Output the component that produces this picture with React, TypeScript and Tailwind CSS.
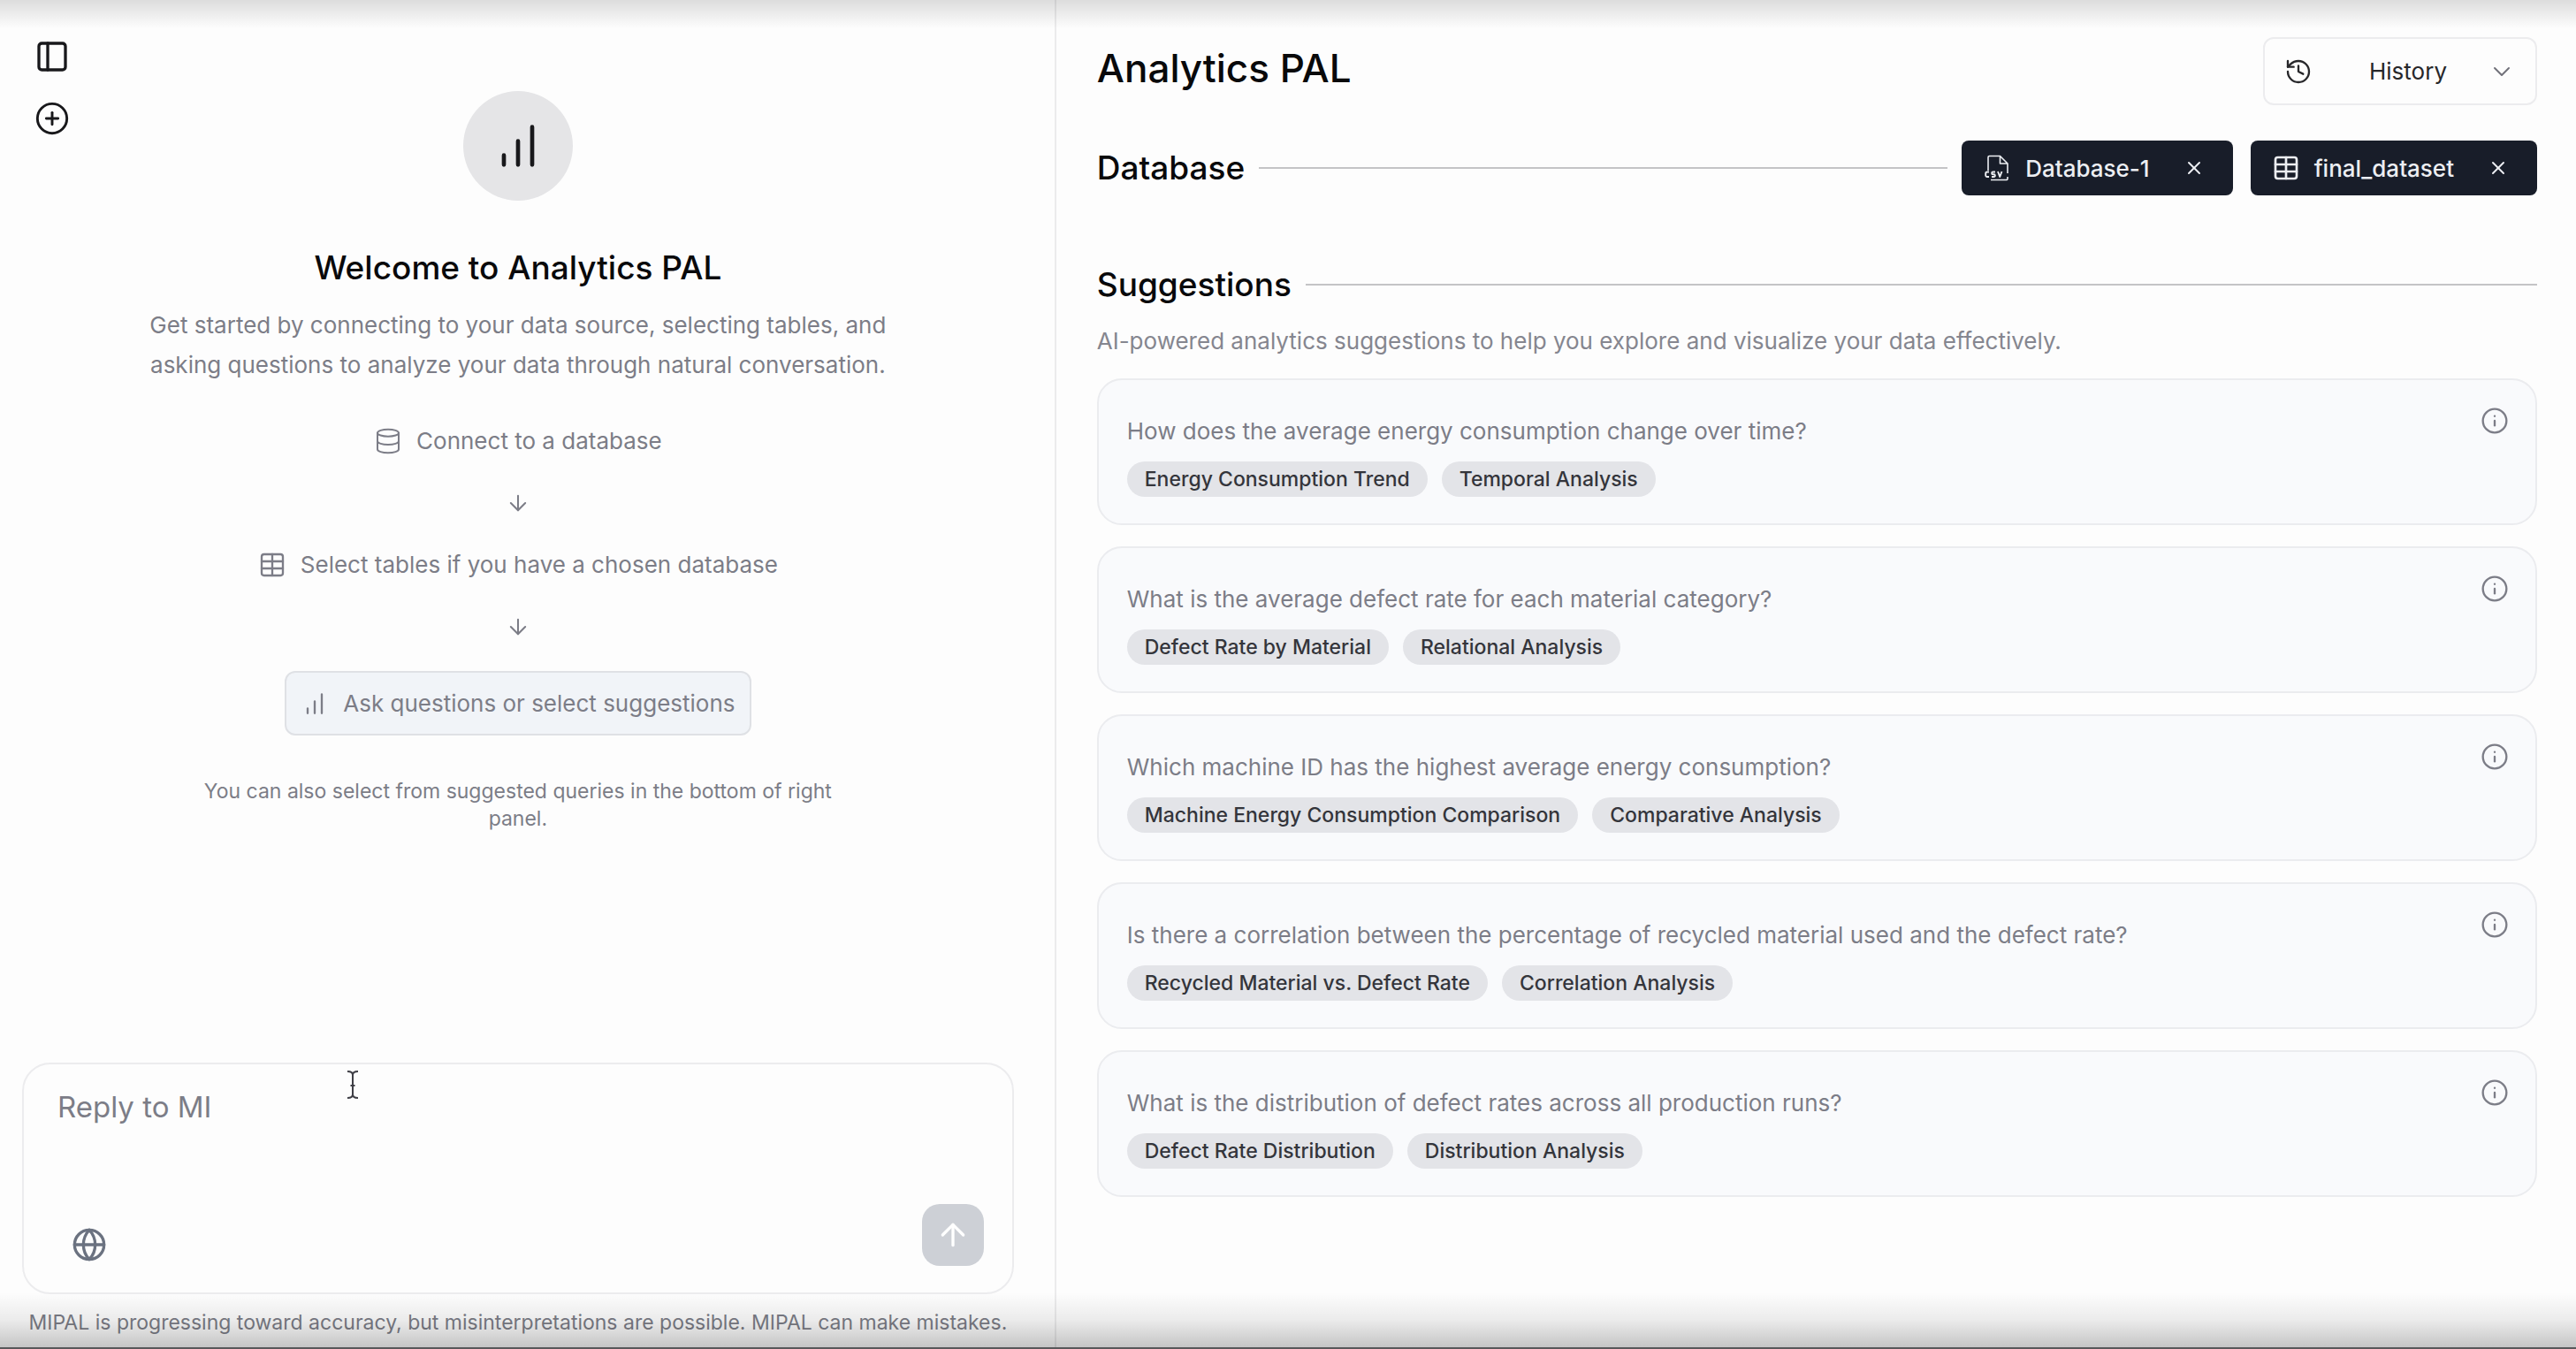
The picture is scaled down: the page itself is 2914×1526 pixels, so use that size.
import type { ReactNode } from "react";
import { ArrowDown, ArrowUp, ChevronDown, CirclePlus, Database, Globe, History, Info, PanelLeft, Table, X } from "lucide-react";

const suggestions = [
  { question: "How does the average energy consumption change over time?", tags: ["Energy Consumption Trend", "Temporal Analysis"] },
  { question: "What is the average defect rate for each material category?", tags: ["Defect Rate by Material", "Relational Analysis"] },
  { question: "Which machine ID has the highest average energy consumption?", tags: ["Machine Energy Consumption Comparison", "Comparative Analysis"] },
  { question: "Is there a correlation between the percentage of recycled material used and the defect rate?", tags: ["Recycled Material vs. Defect Rate", "Correlation Analysis"] },
  { question: "What is the distribution of defect rates across all production runs?", tags: ["Defect Rate Distribution", "Distribution Analysis"] },
];

function Bars({ className }: { className?: string }) {
  return (
    <svg viewBox="0 0 24 24" fill="none" stroke="currentColor" strokeWidth="1.75" strokeLinecap="round" className={className} aria-hidden="true">
      <path d="M6 20v-4M12 20V10M18 20V4" />
    </svg>
  );
}

function CsvIcon({ className }: { className?: string }) {
  return (
    <svg viewBox="0 0 32 32" fill="none" stroke="currentColor" strokeWidth="1.6" strokeLinejoin="round" className={className} aria-hidden="true">
      <path d="M6 19V4a1.500 1.500 0 0 1 1.500-1.500H19.500l8.500 8.500V22M19.500 2.500V11H28M9 29.500h17.500a1.500 1.500 0 0 0 1.500-1.500V26" />
      <path strokeWidth="1.900" d="M7 20.500H5a1.800 1.800 0 0 0-1.800 1.800v1.900a1.800 1.800 0 0 0 1.800 1.800h2M14 20.500h-2.500a1.300 1.300 0 0 0 0 2.750h1a1.300 1.300 0 0 1 0 2.750h-2.500M17 20l2.250 6 2.250-6" />
    </svg>
  );
}

function TextCursor({ className }: { className?: string }) {
  return (
    <svg viewBox="0 0 14 32" fill="none" stroke="currentColor" strokeWidth="2" className={className} aria-hidden="true">
      <path d="M1 1c3.500 0 6 1.500 6 4c0-2.500 2.500-4 6-4M7 4v24M1 31c3.500 0 6-1.500 6-4c0 2.500 2.500 4 6 4M4.500 17h5" />
    </svg>
  );
}

function SourceChip({ icon, name }: { icon: ReactNode; name: string }) {
  return (
    <div className="flex h-[62px] items-center gap-4 rounded-lg bg-[#181d29] pr-8 pl-6 text-[26px] font-medium text-[#eceef2]">
      {icon}
      <span>{name}</span>
      <button aria-label={`Remove ${name}`} className="ml-[22px]">
        <X className="size-6" />
      </button>
    </div>
  );
}

function SectionHeading({ title, children }: { title: string; children?: ReactNode }) {
  return (
    <div className="flex items-center gap-4">
      <h3 className="text-[37px] leading-12 font-medium">{title}</h3>
      <hr className="flex-1 border-t-2 border-[#c4c4c6]" />
      {children}
    </div>
  );
}

export default function App() {
  return (
    <div className="relative flex min-h-screen bg-[#fdfdfd] font-['Inter',sans-serif] text-[#09090b]">
      <section className="flex w-[41%] shrink-0 flex-col border-r-2 border-[#ebebec] pr-[46px] pl-[25px]">
        <div className="relative flex flex-1 flex-col items-center pt-[103px] text-center text-[26px] leading-10 text-[#7c7d87]">
          <nav className="absolute top-11 left-3.5 flex flex-col gap-[30px] text-[#18181b]">
            <button aria-label="Toggle sidebar"><PanelLeft className="size-10" /></button>
            <button aria-label="New chat"><CirclePlus className="size-10" strokeWidth={1.75} /></button>
          </nav>
          <div className="flex size-[124px] items-center justify-center rounded-full bg-[#e5e5e7] text-[#18181b]">
            <Bars className="size-16" />
          </div>
          <h1 className="mt-12 text-[37px] leading-14 font-medium text-[#09090b]">Welcome to Analytics PAL</h1>
          <p className="mt-3.5 w-[880px] max-w-full leading-[45px]">
            Get started by connecting to your data source, selecting tables, and asking questions to analyze your data through natural conversation.
          </p>
          <div className="mt-11 flex items-center gap-4">
            <Database className="size-8" strokeWidth={1.5} />
            Connect to a database
          </div>
          <ArrowDown className="my-9 size-7" strokeWidth={1.75} />
          <div className="flex items-center gap-4">
            <Table className="size-8" strokeWidth={1.75} />
            Select tables if you have a chosen database
          </div>
          <ArrowDown className="my-9 size-7" strokeWidth={1.75} />
          <button className="flex h-[73px] items-center gap-4 rounded-xl border-2 border-[#dfe1e5] bg-[#f1f4f8] px-4">
            <Bars className="size-8" />
            Ask questions or select suggestions
          </button>
          <p className="mt-12 w-[760px] max-w-full text-[23px] leading-[31px]">
            You can also select from suggested queries in the bottom of right panel.
          </p>
        </div>
        <form className="relative flex h-[262px] flex-col rounded-[32px] border-2 border-[#ececee] pt-6 pr-8 pb-[30px] pl-[38px]">
          <textarea aria-label="Message" placeholder="Reply to MI" className="flex-1 resize-none bg-transparent text-[33px] leading-12 outline-none placeholder:text-[#7c7d87]" />
          <div className="flex items-end justify-between">
            <button type="button" aria-label="Search the web" className="mb-1 ml-4 text-[#6b7280]"><Globe className="size-10" /></button>
            <button type="button" aria-label="Send" className="flex size-[70px] items-center justify-center rounded-[20px] bg-[#cdd0d6] text-white"><ArrowUp className="size-10" /></button>
          </div>
          <TextCursor className="pointer-events-none absolute top-[7px] left-[365px] h-8 w-3.5 text-[#3f3f46]" />
        </form>
        <p className="pt-4 pb-3.5 text-center text-[23px] leading-8 text-[#7c7d87]">
          MIPAL is progressing toward accuracy, but misinterpretations are possible. MIPAL can make mistakes.
        </p>
      </section>

      <main className="flex min-w-0 flex-1 flex-col pt-[42px] pr-11 pl-[46px]">
        <header className="flex items-center justify-between">
          <h2 className="pb-2 text-[44px] leading-14 font-medium">Analytics PAL</h2>
          <button className="flex h-[77px] w-[310px] items-center rounded-xl border-2 border-[#ececee] px-[22px] text-[26px] text-[#27272a]">
            <History className="size-8" strokeWidth={1.75} />
            <span className="mr-[46px] ml-auto">History</span>
            <ChevronDown className="size-8 text-[#71717a]" strokeWidth={1.5} />
          </button>
        </header>
        <div className="mt-10">
          <SectionHeading title="Database">
            <div className="flex gap-5">
              <SourceChip icon={<CsvIcon className="size-8" />} name="Database-1" />
              <SourceChip icon={<Table className="size-8" />} name="final_dataset" />
            </div>
          </SectionHeading>
        </div>
        <div className="mt-[77px]">
          <SectionHeading title="Suggestions" />
        </div>
        <p className="mt-5 text-[26px] leading-10 text-[#85868f]">
          AI-powered analytics suggestions to help you explore and visualize your data effectively.
        </p>
        <ul className="mt-[22px] flex flex-col gap-6">
          {suggestions.map((s) => (
            <li key={s.question} className="flex items-start justify-between rounded-[28px] border-2 border-[#ebecef] bg-[#f9fafc] py-[30px] pr-[30px] pl-8">
              <div className="pt-2">
                <p className="text-[26px] leading-10 text-[#7c7d87]">{s.question}</p>
                <div className="mt-3.5 flex gap-4">
                  {s.tags.map((t) => (
                    <span key={t} className="rounded-full bg-[#e3e4e8] px-5 text-[23px] leading-10 font-medium text-[#34353b]">{t}</span>
                  ))}
                </div>
              </div>
              <button aria-label={`About: ${s.question}`} className="text-[#7c7d87]"><Info className="size-8" strokeWidth={1.75} /></button>
            </li>
          ))}
        </ul>
      </main>

      <div className="pointer-events-none absolute inset-x-0 top-0 h-8 bg-linear-to-b from-black/13 to-transparent" />
      <div className="pointer-events-none absolute inset-x-0 bottom-0 h-16 border-b-2 border-[#58585a] bg-linear-to-t from-black/22 via-black/7 to-transparent" />
    </div>
  );
}
